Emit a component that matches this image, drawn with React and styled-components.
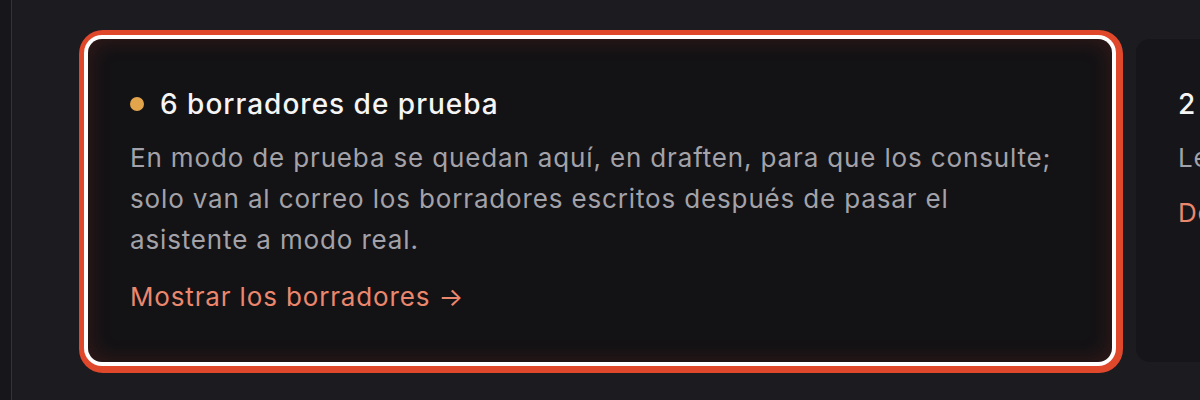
import React from 'react';
import styled, { createGlobalStyle } from 'styled-components';

const GlobalStyle = createGlobalStyle`
  html, body {
    margin: 0;
    padding: 0;
    background: #1c1b20;
    font-family: Inter, "Noto Sans", sans-serif;
    -webkit-font-smoothing: antialiased;
  }
`

const Page = styled.div`
    display: flex;
    height: 400px;
    overflow: hidden;
    background: #1c1b20;
`
const Rail = styled.aside`
    flex: 0 0 11px;
    background: #17161a;
    border-right: 1px solid #34333a;
`
const Main = styled.main`
    flex: 1;
    min-width: 0;
    padding: 39px 0 0 76px;
    overflow: hidden;
`
const Cards = styled.div`
    display: grid;
    grid-template-columns: repeat(2, 1024px);
    gap: 24px;
    align-items: start;
`
const Card = styled.section`
    box-sizing: border-box;
    height: 323px;
    padding: 48px 42px;
    border-radius: 14px;
    background: ${p => (p.$active ? '#131215' : '#161519')};
    box-shadow: ${p => (p.$active
        ? 'inset 0 0 22px rgba(190, 60, 40, 0.22), 0 0 0 4px #ffffff, 1px 1px 0 10px #e0482b'
        : 'none')};
`
const Title = styled.h2`
    display: flex;
    align-items: center;
    gap: 16px;
    margin: 0;
    font-size: 28px;
    line-height: 34px;
    font-weight: 500;
    letter-spacing: 1px;
    color: #f5f5f6;
    white-space: nowrap;
`
const Dot = styled.span`
    width: 14px;
    height: 14px;
    border-radius: 50%;
    background: ${p => p.$color};
    flex: none;
`
const Body = styled.p`
    margin: 16px 0 0;
    font-size: 26px;
    line-height: 41px;
    letter-spacing: 0.85px;
    color: #a3a2a9;
    white-space: ${p => (p.$nowrap ? 'nowrap' : 'normal')};
`
const Link = styled.a`
    display: inline-block;
    margin-top: ${p => p.$gap || 20}px;
    font-size: 26px;
    line-height: 34px;
    letter-spacing: 0.85px;
    color: #ea876d;
    text-decoration: none;
    white-space: nowrap;
`

const App = () => {
    return (
        <>
            <GlobalStyle />
            <Page>
                <Rail />
                <Main>
                    <Cards>
                        <Card $active>
                            <Title><Dot $color="#e2a54c" />6 borradores de prueba</Title>
                            <Body>
                                En modo de prueba se quedan aquí, en draften, para que los consulte;
                                solo van al correo los borradores escritos después de pasar el
                                asistente a modo real.
                            </Body>
                            <Link href="#">Mostrar los borradores →</Link>
                        </Card>
                        <Card>
                            <Title>2 correos esperan respuesta</Title>
                            <Body $nowrap>Le esperan en la bandeja de entrada.</Body>
                            <Link href="#" $gap={18}>Devolver a la bandeja →</Link>
                        </Card>
                    </Cards>
                </Main>
            </Page>
        </>
    );
}
export default App;
